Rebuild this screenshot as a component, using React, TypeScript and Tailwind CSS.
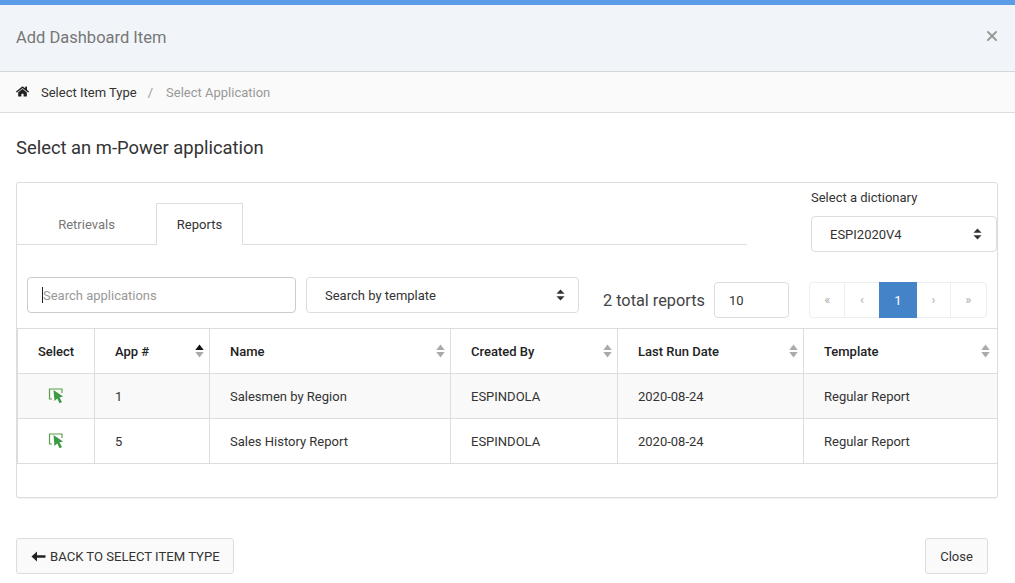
import { X } from 'lucide-react';
import { FaHome } from 'react-icons/fa';

const columns = [
  { label: 'Select', width: 'w-[77px]', sort: '', center: true },
  { label: 'App #', width: 'w-[115px]', sort: '-mr-[15px]', active: true },
  { label: 'Name', width: 'w-[241px]', sort: '-mr-[15px]' },
  { label: 'Created By', width: 'w-[167px]', sort: '-mr-[15px]' },
  { label: 'Last Run Date', width: 'w-[186px]', sort: '-mr-[15px]' },
  { label: 'Template', width: 'w-[194px]', sort: '-mr-[13px]' },
];

const rows = [
  { app: '1', name: 'Salesmen by Region', by: 'ESPINDOLA', date: '2020-08-24', template: 'Regular Report' },
  { app: '5', name: 'Sales History Report', by: 'ESPINDOLA', date: '2020-08-24', template: 'Regular Report' },
];

const SortIcon = ({ active }: { active?: boolean }) => (
  <svg width="9" height="14" viewBox="0 0 9 14" className="shrink-0">
    <path d="M4.5 0.5 L8.7 6 H0.3 Z" fill={active ? '#111' : '#aaa'} />
    <path d="M4.5 13.5 L8.7 8 H0.3 Z" fill="#aaa" />
  </svg>
);

const SelectArrows = () => (
  <svg width="9" height="12" viewBox="0 0 9 12" className="shrink-0">
    <path d="M4.5 0.5 L8.5 4.8 H0.5 Z" fill="#333" />
    <path d="M4.5 11.5 L8.5 7.2 H0.5 Z" fill="#333" />
  </svg>
);

const PickIcon = () => (
  <svg width="17" height="17" viewBox="0 0 17 17">
    <path d="M5 2 H1.5 V12 H4 M5 2 H14 V6" fill="none" stroke="#5a9e4b" strokeWidth="1.2" />
    <path d="M5.5 3 L15 9.5 L11.5 10.5 L14 15 L11.5 16.2 L9.3 11.5 L6.5 14 Z" fill="#3d9a45" />
  </svg>
);

const BackArrow = () => (
  <svg width="15" height="11" viewBox="0 0 15 11" className="shrink-0">
    <path d="M0.5 5.5 L6 0.5 V4.2 H14.5 V6.8 H6 V10.5 Z" fill="#222" />
  </svg>
);

export default function App() {
  return (
    <div className="w-[1015px] h-[583px] overflow-hidden bg-white text-[#333] font-['Roboto',sans-serif] text-[13px]">
      <div className="h-[5px] bg-[#5a9de6]" />
      <div className="h-[67px] flex items-center justify-between pl-4 pr-[15px] bg-[#f1f5f9] border-b border-[#d5d6d8]">
        <h1 className="text-[16.5px] font-normal text-[#777]">Add Dashboard Item</h1>
        <X size={16} strokeWidth={3} className="text-[#999] -mt-[5px]" />
      </div>
      <div className="h-[41px] flex items-center pl-4 bg-[#fafafa] border-b border-[#ddd]">
        <FaHome size={13} className="text-[#222] mr-3 -mt-[1px]" />
        <span className="text-[#333] pt-px">Select Item Type</span>
        <span className="text-[#999] ml-[11px] mr-[13px] pt-px">/</span>
        <span className="text-[#999] pt-px">Select Application</span>
      </div>
      <h2 className="pl-4 pt-[23px] h-[69px] text-[18.4px] leading-[24px] text-[#333]">Select an m-Power application</h2>
      <div className="mx-4 w-[982px] h-[316px] bg-white border border-[#ddd] rounded-[3px] shadow-[0_1px_1px_rgba(0,0,0,0.05)]">
        <div className="flex h-[70px]">
          <div className="w-[730px] h-[62px] flex items-end border-b border-[#ddd]">
            <div className="w-[139px] h-[41px] pt-[2px] flex items-center justify-center text-[#777]">Retrievals</div>
            <div className="w-[87px] h-[42px] -mb-px flex items-center justify-center bg-white border border-b-0 border-[#ddd] text-[#333]">Reports</div>
          </div>
          <div className="ml-[64px] w-[186px]">
            <div className="h-[33px] pt-[7px] leading-[16px] text-[#333]">Select a dictionary</div>
            <div className="h-[36px] flex items-center justify-between pl-[18px] pr-[14px] border border-[#ddd] rounded-[4px] text-[#333]">
              <span className="pt-[2px]">ESPI2020V4</span>
              <SelectArrows />
            </div>
          </div>
        </div>
        <div className="flex items-start pt-6 pl-[10px] h-[75px]">
          <div className="relative">
            <input
              placeholder="Search applications"
              className="w-[269px] h-9 pl-[15px] pr-[14px] border border-[#ccc] rounded-[4px] text-[13px] placeholder:text-[#999] outline-none"
            />
            <span className="absolute left-[15px] top-[10px] w-px h-4 bg-[#222]" />
          </div>
          <div className="ml-[10px] w-[273px] h-9 flex items-center justify-between pl-[18px] pr-[13px] border border-[#ddd] rounded-[4px] text-[#333]">
            <span className="pt-[2px]">Search by template</span>
            <SelectArrows />
          </div>
          <div className="mt-[5px] flex items-start">
            <span className="ml-6 mr-[9px] mt-[7px] text-[16.3px] leading-[24px] text-[#444]">2 total reports</span>
            <div className="w-[75px] h-9 flex items-center pl-[14px] pt-[2px] border border-[#ddd] rounded-[4px]">10</div>
            <div className="ml-5 flex h-9 border border-[#eee] rounded-[4px] text-[#aaa]">
              <span className="w-[35px] pl-px flex items-center justify-center border-r border-[#eee]">«</span>
              <span className="w-[34px] flex items-center justify-center">‹</span>
              <span className="w-[38px] -my-px pt-px flex items-center justify-center bg-[#4583c9] text-white">1</span>
              <span className="w-[34px] flex items-center justify-center border-r border-[#eee]">›</span>
              <span className="w-[35px] flex items-center justify-center">»</span>
            </div>
          </div>
        </div>
        <table className="table-fixed border-collapse w-[980px]">
          <thead>
            <tr className="h-[45px]">
              {columns.map((col) => (
                <th key={col.label} className={`${col.width} border border-[#ddd] px-[20px] font-medium text-[#222]`}>
                  <div className={col.center ? 'flex justify-center' : `flex items-center justify-between ${col.sort}`}>
                    <span className="pt-[2px]">{col.label}</span>
                    {!col.center && <SortIcon active={col.active} />}
                  </div>
                </th>
              ))}
            </tr>
          </thead>
          <tbody>
            {rows.map((row, i) => (
              <tr key={row.app} className={`h-[45px] ${i === 0 ? 'bg-[#f9f9f9]' : 'bg-white'}`}>
                <td className="border border-[#ddd]">
                  <div className="flex justify-center -mt-[1px]"><PickIcon /></div>
                </td>
                <td className="border border-[#ddd] px-[20px] pt-[2px]">{row.app}</td>
                <td className="border border-[#ddd] px-[20px] pt-[2px]">{row.name}</td>
                <td className="border border-[#ddd] px-[20px] pt-[2px]">{row.by}</td>
                <td className="border border-[#ddd] px-[20px] pt-[2px]">{row.date}</td>
                <td className="border border-[#ddd] px-[20px] pt-[2px]">{row.template}</td>
              </tr>
            ))}
          </tbody>
        </table>
      </div>
      <div className="flex justify-between mt-10 pl-4 pr-[27px]">
        <button className="h-9 w-[218px] pl-[14px] flex items-center gap-[4px] bg-[#fafafa] border border-[#ddd] rounded-[3px] text-[#333]">
          <BackArrow />
          <span className="pt-[2px] text-[13.1px]">BACK TO SELECT ITEM TYPE</span>
        </button>
        <button className="h-9 w-[63px] pt-[2px] bg-[#fafafa] border border-[#ddd] rounded-[3px] text-[#333]">Close</button>
      </div>
    </div>
  );
}
